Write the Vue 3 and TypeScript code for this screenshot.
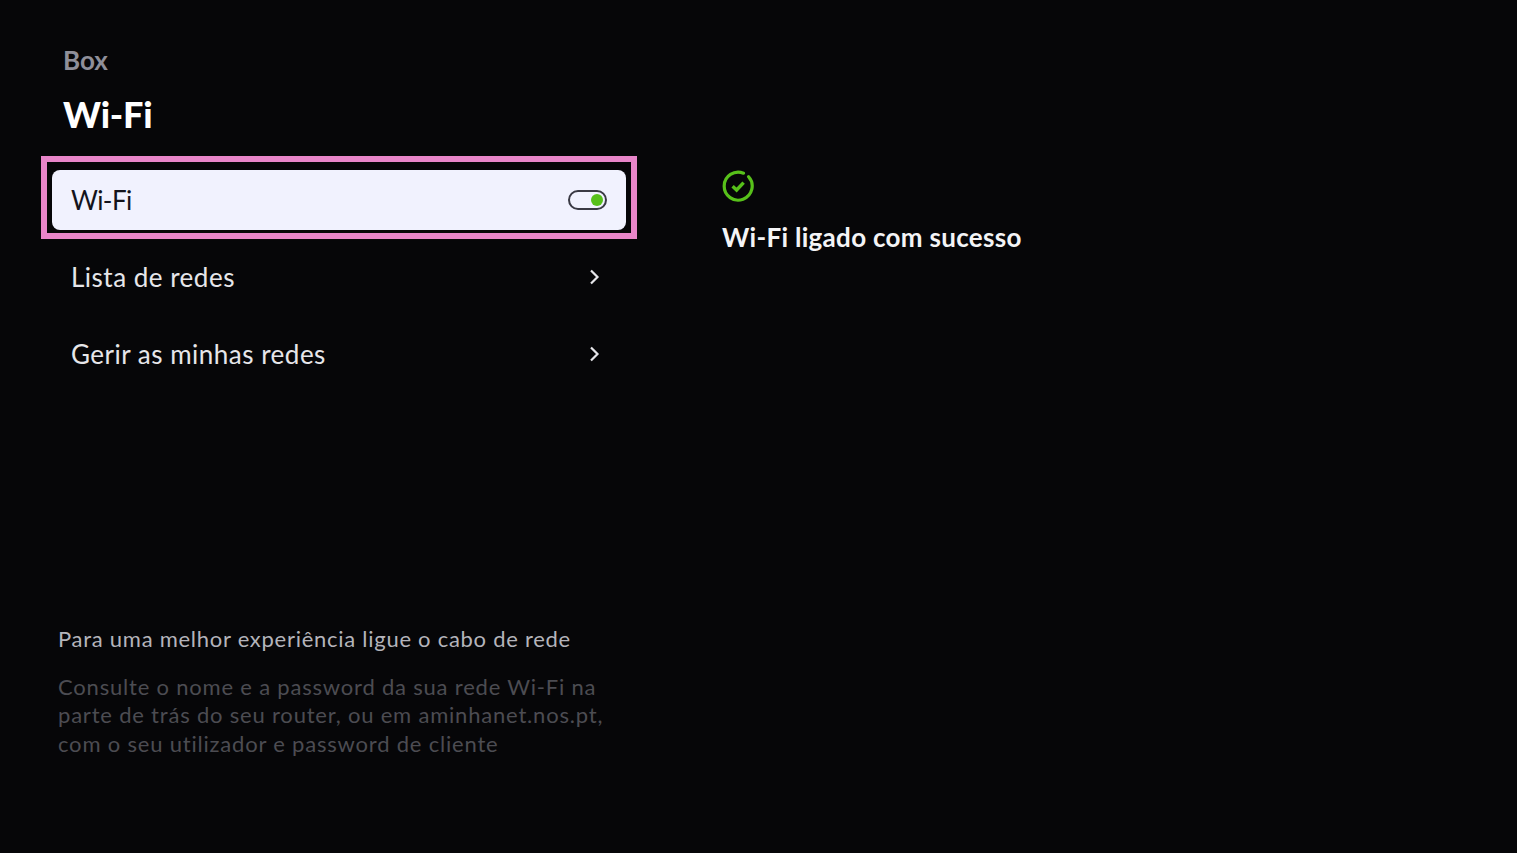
<script setup lang="ts">
const rows: string[] = ['Lista de redes', 'Gerir as minhas redes']
</script>

<template>
  <main class="page">
    <section class="left">
      <header class="head">
        <div class="crumb">Box</div>
        <h1 class="title">Wi-Fi</h1>
      </header>
      <div class="frame">
        <div class="card">
          <span class="card-label">Wi-Fi</span>
          <span class="toggle"><i class="knob"></i></span>
        </div>
      </div>
      <nav class="rows">
        <div v-for="r in rows" :key="r" class="row">
          <span>{{ r }}</span>
          <svg class="chev" width="12" height="16" viewBox="0 0 12 16" fill="none">
            <path d="M3 1.5 L9.5 8 L3 14.5" stroke="#e6e6ea" stroke-width="2.2" />
          </svg>
        </div>
      </nav>
      <footer class="note">
        <p class="lead">Para uma melhor experiência ligue o cabo de rede</p>
        <p class="sub">Consulte o nome e a password da sua rede Wi-Fi na<br />parte de trás do seu router, ou em aminhanet.nos.pt,<br />com o seu utilizador e password de cliente</p>
      </footer>
    </section>
    <section class="right">
      <svg class="check" width="32" height="32" viewBox="0 0 32 32" fill="none">
        <path d="M21.5 3.2 A14 14 0 1 0 26.6 6.8" stroke="#57c01a" stroke-width="3.2" stroke-linecap="round" />
        <path d="M10.6 16.2 L14.6 20 L21.6 12.6" stroke="#57c01a" stroke-width="3.4" />
      </svg>
      <div class="msg">Wi-Fi ligado com sucesso</div>
    </section>
  </main>
</template>

<style>
html, body { margin: 0; background: #060608; }
</style>

<style scoped>
.page {
  width: 1517px;
  height: 853px;
  box-sizing: border-box;
  overflow: hidden;
  display: flex;
  background: #060608;
  font-family: Lato, "Noto Sans", sans-serif;
}
.left {
  width: 596px;
  margin-left: 41px;
  display: flex;
  flex-direction: column;
}
.head { padding: 44px 0 0 22px; height: 156px; box-sizing: border-box; flex: none; }
.crumb { font-size: 26px; line-height: 32px; font-weight: 700; color: #8f8f99; }
.title { margin: 16px 0 0; font-size: 36px; line-height: 44px; font-weight: 900; letter-spacing: -0.2px; color: #fff; }
.frame {
  height: 83px;
  flex: none;
  box-sizing: border-box;
  border: 6px solid #e885c9;
  padding: 8px 5px 3px;
  display: flex;
}
.card {
  flex: 1;
  background: #f1f2fe;
  border-radius: 8px;
  color: #14141c;
  font-size: 26px;
  display: flex;
  align-items: center;
  justify-content: space-between;
  padding: 0 19px 1px;
}
.card-label { letter-spacing: -0.6px; }
.toggle {
  width: 39px;
  height: 20px;
  box-sizing: border-box;
  border: 2px solid #3a3a44;
  border-radius: 10px;
  display: flex;
  align-items: center;
  justify-content: flex-end;
  padding-right: 2px;
}
.knob { width: 12px; height: 12px; border-radius: 50%; background: #57c01a; }
.rows { display: flex; flex-direction: column; gap: 17px; margin-top: 8px; padding: 0 11px; }
.row {
  height: 60px;
  display: flex;
  align-items: center;
  justify-content: space-between;
  padding: 0 19px;
  color: #e6e6ea;
  font-size: 26px;
  letter-spacing: 0.5px;
}
.chev { margin-right: 7px; }
.note { margin-top: auto; margin-bottom: 95px; padding-left: 17px; }
.lead { margin: 0; font-size: 22px; line-height: 28px; letter-spacing: 0.73px; color: #b4b4bb; transform: translateY(-1px); }
.sub { margin: 19px 0 0; font-size: 22px; line-height: 28.5px; letter-spacing: 0.8px; color: #4c4c52; }
.right { margin-left: 85px; padding-top: 170px; }
.check { display: block; }
.msg { margin-top: 18px; font-size: 26px; line-height: 34px; font-weight: 700; letter-spacing: 0.3px; color: #f4f4f6; }
</style>
